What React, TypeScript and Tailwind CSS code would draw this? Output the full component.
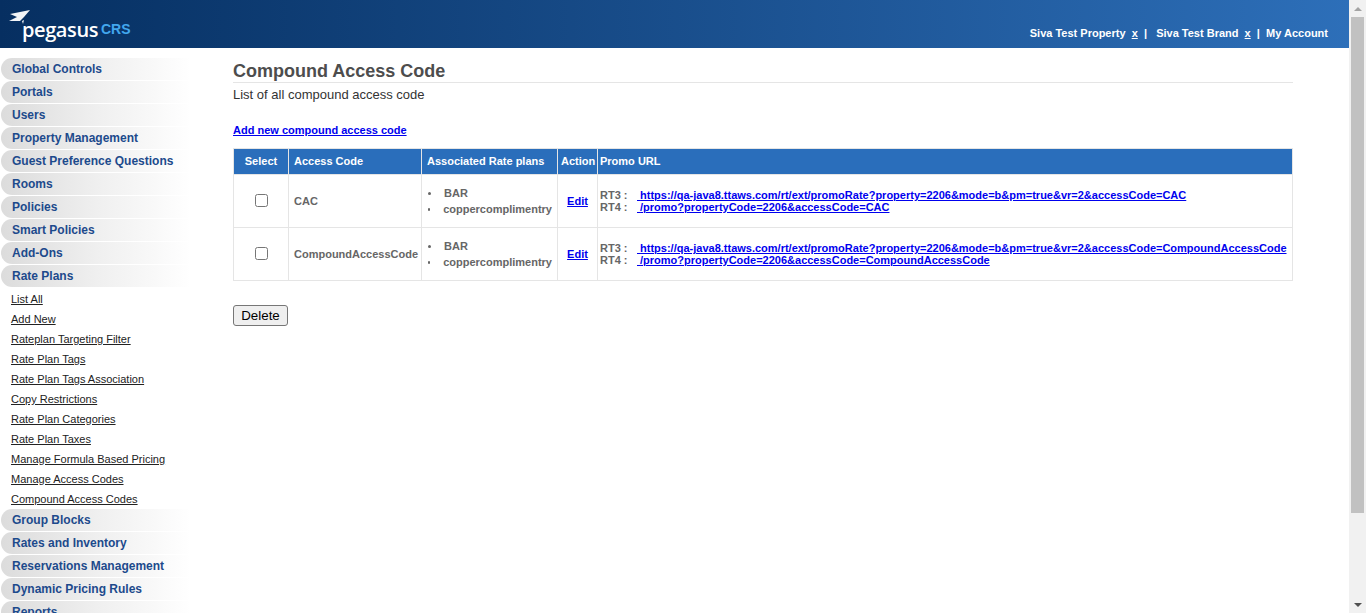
const font = { fontFamily: '"Liberation Sans", Arial, sans-serif' };

function NavItem({ label }: { label: string }) {
  return (
    <div className="h-[22px] mb-px w-[190px] ml-px rounded-l-[11px] bg-gradient-to-r from-[#dcdcdc] via-[#efefef] to-white pl-[11px] text-[12px] leading-[22px] font-bold text-[#1d4a8c]">
      {label}
    </div>
  );
}

const sub = [
  "List All",
  "Add New",
  "Rateplan Targeting Filter",
  "Rate Plan Tags",
  "Rate Plan Tags Association",
  "Copy Restrictions",
  "Rate Plan Categories",
  "Rate Plan Taxes",
  "Manage Formula Based Pricing",
  "Manage Access Codes",
  "Compound Access Codes",
];

const top = ["Global Controls", "Portals", "Users", "Property Management", "Guest Preference Questions", "Rooms", "Policies", "Smart Policies", "Add-Ons", "Rate Plans"];
const bottom = ["Group Blocks", "Rates and Inventory", "Reservations Management", "Dynamic Pricing Rules"];

const rows = [
  {
    code: "CAC",
    rt3: "https://qa-java8.ttaws.com/rt/ext/promoRate?property=2206&mode=b&pm=true&vr=2&accessCode=CAC",
    rt4: "/promo?propertyCode=2206&accessCode=CAC",
  },
  {
    code: "CompoundAccessCode",
    rt3: "https://qa-java8.ttaws.com/rt/ext/promoRate?property=2206&mode=b&pm=true&vr=2&accessCode=CompoundAccessCode",
    rt4: "/promo?propertyCode=2206&accessCode=CompoundAccessCode",
  },
];

const th = "bg-[#2a6ebb] border border-[#e5e5e5] text-white text-[11px] font-bold h-[26px] py-0";
const td = "border border-[#e5e5e5] text-[11px] font-bold text-[#666] py-0";

export default function App() {
  return (
    <div className="flex h-[613px] w-[1366px] overflow-hidden bg-white" style={font}>
      <div className="w-[1349px] flex flex-col">
        <header className="h-[48px] shrink-0 flex justify-between bg-gradient-to-r from-[#062f61] to-[#2d6fb9]">
          <div className="relative w-[200px]">
            <svg width="22" height="14" viewBox="0 0 22 14" className="absolute left-[9px] top-[10px]">
              <path d="M1 4 L21 0 L15 7 L11 11 L0 11 L8 7 Z" fill="#f2f5f8" />
              <path d="M13 11 L14 14 L15 10 Z" fill="#f2f5f8" />
            </svg>
            <span className="absolute left-[22px] top-[17px] text-[20px] leading-[26px] tracking-[-0.4px] font-semibold text-white" style={{ fontFamily: '"Open Sans", sans-serif' }}>pegasus</span>
            <span className="absolute left-[101px] top-[21px] text-[14px] leading-[16px] font-bold text-[#42a7ee]">CRS</span>
          </div>
          <div className="pt-[26px] pr-[21px] text-[11px] leading-[14px] font-bold text-white whitespace-pre">
            Siva Test Property{"  "}<span className="underline">x</span>{"  "}|{"   "}Siva Test Brand{"  "}<span className="underline">x</span>{"  "}|{"  "}My Account
          </div>
        </header>
        <div className="flex flex-1 min-h-0 overflow-hidden">
          <nav className="w-[233px] shrink-0 pt-[10px]">
            {top.map((l) => <NavItem key={l} label={l} />)}
            <ul className="pl-[11px] pt-px">
              {sub.map((s) => (
                <li key={s} className="h-[20px] text-[11px] leading-[20px] text-[#222] underline">{s}</li>
              ))}
            </ul>
            {bottom.map((l) => <NavItem key={l} label={l} />)}
            <div className="h-[14px] w-[190px] ml-px rounded-tl-[11px] bg-gradient-to-r from-[#dcdcdc] via-[#efefef] to-white pl-[11px] text-[12px] leading-[22px] font-bold text-[#1d4a8c]">Reports</div>
          </nav>
          <main className="w-[1060px] pt-[13px]">
            <h1 className="text-[18px] leading-[21px] font-bold text-[#4d4d4d] border-b border-[#e5e5e5]">Compound Access Code</h1>
            <p className="text-[13px] leading-[14px] text-[#333] mt-[5px]">List of all compound access code</p>
            <a className="block text-[11px] leading-[13px] font-bold text-[#0000ee] underline mt-[22px]">Add new compound access code</a>
            <table className="mt-[11px] w-[1060px] border-collapse table-fixed">
              <colgroup>
                <col className="w-[55px]" />
                <col className="w-[133px]" />
                <col className="w-[136px]" />
                <col className="w-[40px]" />
                <col />
              </colgroup>
              <thead>
                <tr>
                  <th className={th + " text-center px-[5px]"}>Select</th>
                  <th className={th + " text-left px-[5px]"}>Access Code</th>
                  <th className={th + " text-left px-[5px]"}>Associated Rate plans</th>
                  <th className={th + " text-left px-[3px]"}>Action</th>
                  <th className={th + " text-left px-[2px]"}>Promo URL</th>
                </tr>
              </thead>
              <tbody>
                {rows.map((r) => (
                  <tr key={r.code} className="h-[53px]">
                    <td className={td + " text-center px-[5px]"}>
                      <input type="checkbox" className="block mx-auto mb-[2px] w-[13px] h-[13px]" />
                    </td>
                    <td className={td + " px-[5px]"}>{r.code}</td>
                    <td className={td + " px-[5px]"}>
                      <ul className="leading-[16px]">
                        {["BAR", "coppercomplimentry"].map((p) => (
                          <li key={p} className="flex items-center">
                            <span className="ml-px mr-[13px] w-[3px] h-[3px] rounded-full bg-[#666]" />
                            {p}
                          </li>
                        ))}
                      </ul>
                    </td>
                    <td className={td + " text-center px-[5px]"}>
                      <a className="text-[#0000ee] underline">Edit</a>
                    </td>
                    <td className={td + " px-[2px] leading-[12px]"}>
                      <div className="whitespace-nowrap flex">
                        <span className="w-[37px] shrink-0">RT3 :</span>
                        <a className="text-[#0000ee] underline whitespace-pre"> {r.rt3}</a>
                      </div>
                      <div className="whitespace-nowrap flex">
                        <span className="w-[37px] shrink-0">RT4 :</span>
                        <a className="text-[#0000ee] underline whitespace-pre"> {r.rt4}</a>
                      </div>
                    </td>
                  </tr>
                ))}
              </tbody>
            </table>
            <button className="mt-[24px] block w-[55px] h-[21px] border border-[#767676] rounded-[3px] bg-[#efefef] text-[13.33px] leading-[16px] text-black">Delete</button>
          </main>
        </div>
      </div>
      <div className="w-[17px] shrink-0 bg-[#f1f1f1] flex flex-col items-center">
        <div className="h-[17px] flex items-center justify-center">
          <svg width="8" height="4" viewBox="0 0 8 4"><path d="M4 0 L8 4 L0 4 Z" fill="#a3a3a3" /></svg>
        </div>
        <div className="w-[13px] h-[496px] bg-[#c1c1c1]" />
        <div className="flex-1" />
        <div className="h-[17px] flex items-center justify-center">
          <svg width="8" height="4" viewBox="0 0 8 4"><path d="M0 0 L8 0 L4 4 Z" fill="#505050" /></svg>
        </div>
      </div>
    </div>
  );
}
